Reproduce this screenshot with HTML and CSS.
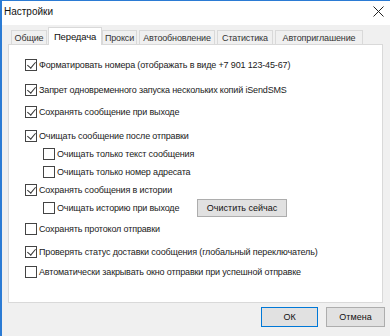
FILE: index.html
```html
<!DOCTYPE html>
<html lang="ru">
<head>
<meta charset="utf-8">
<link rel="stylesheet" href="styles.css">
</head>
<body>
<div class="window">
  <div class="titlebar">
    <span class="title">Настройки</span>
    <svg class="close" width="11" height="11" viewBox="0 0 11 11"><path d="M0.5 0.5L10.5 10.5M10.5 0.5L0.5 10.5" stroke="#222" stroke-width="1" fill="none"/></svg>
  </div>
  <div class="body">
    <div class="tabs">
      <div class="tab t1">Общие</div>
      <div class="tab t2 active">Передача</div>
      <div class="tab t3">Прокси</div>
      <div class="tab t4">Автообновление</div>
      <div class="tab t5">Статистика</div>
      <div class="tab t6">Автоприглашение</div>
    </div>
    <div class="panel">
      <div class="row r1"><span class="cb on"></span><span>Форматировать номера (отображать в виде +7 901 123-45-67)</span></div>
      <div class="row r2"><span class="cb on"></span><span>Запрет одновременного запуска нескольких копий iSendSMS</span></div>
      <div class="row r3"><span class="cb on"></span><span>Сохранять сообщение при выходе</span></div>
      <div class="row r4"><span class="cb on"></span><span>Очищать сообщение после отправки</span></div>
      <div class="row sub r5"><span class="cb"></span><span>Очищать только текст сообщения</span></div>
      <div class="row sub r6"><span class="cb"></span><span>Очищать только номер адресата</span></div>
      <div class="row r7"><span class="cb on"></span><span>Сохранять сообщения в истории</span></div>
      <div class="row sub r8"><span class="cb"></span><span class="fixed">Очищать историю при выходе</span><button class="btn clear">Очистить сейчас</button></div>
      <div class="row r9"><span class="cb"></span><span>Сохранять протокол отправки</span></div>
      <div class="row r10"><span class="cb on"></span><span>Проверять статус доставки сообщения (глобальный переключатель)</span></div>
      <div class="row r11"><span class="cb"></span><span>Автоматически закрывать окно отправки при успешной отправке</span></div>
    </div>
    <div class="footer">
      <button class="btn ok">ОК</button>
      <button class="btn cancel">Отмена</button>
    </div>
  </div>
</div>
</body>
</html>
```
FILE: styles.css
```css
* { box-sizing: border-box; }
html, body { margin: 0; padding: 0; }
body {
  font-family: "Liberation Sans", Arial, sans-serif;
  font-size: 9px;
  letter-spacing: -0.15px;
  color: #1a1a1a;
  background: #f0f0f0;
}
.window {
  width: 390px;
  height: 336px;
  border-left: 2px solid #2b7bd4;
  border-top: 1px solid #2b7bd4;
  background: #f0f0f0;
  overflow: hidden;
}
.titlebar {
  height: 24px;
  background: #fff;
  display: flex;
  align-items: center;
  justify-content: space-between;
  padding: 0 6px 3px 2px;
}
.title { font-size: 10px; color: #111; letter-spacing: 0; }
.body { padding: 0 7px 0 6px; }
.tabs {
  display: flex;
  align-items: flex-end;
  height: 19px;
  padding-left: 3px;
}
.tab {
  height: 14px;
  border: 1px solid #d9d9d9;
  border-bottom: none;
  background: #f0f0f0;
  display: flex;
  align-items: center;
  justify-content: center;
  font-size: 9px;
  color: #333;
  margin-right: 2px;
  white-space: nowrap;
  overflow: hidden;
}
.tab.active {
  height: 18px;
  background: #fff;
  color: #111;
  font-size: 9.5px;
  margin-left: -1px;
  margin-right: 0;
  position: relative;
  top: 1px;
}
.t1 { width: 36px; }
.t2 { width: 54px; }
.t3 { width: 35px; }
.t4 { width: 76px; }
.t5 { width: 56px; }
.t6 { width: 88px; }
.panel {
  height: 259px;
  background: #fff;
  border: 1px solid #d9d9d9;
  padding: 11px 0 0 16px;
}
.row {
  display: flex;
  align-items: center;
  height: 18px;
  white-space: nowrap;
}
.row.sub { padding-left: 18px; }
.cb {
  width: 12px;
  height: 12px;
  border: 1px solid #444;
  background: #fff;
  margin-right: 2px;
  flex: none;
  position: relative;
}
.cb.on::after {
  content: "";
  position: absolute;
  left: 3px;
  top: 0px;
  width: 4px;
  height: 7px;
  border-right: 1.1px solid #333;
  border-bottom: 1.1px solid #333;
  transform: rotate(40deg);
}
.r2 { margin-top: 7px; }
.r3 { margin-top: 4px; }
.r4 { margin-top: 6px; }
.r9 { margin-top: 3px; }
.r10 { margin-top: 5px; }
.r11 { margin-top: 2px; }
.fixed { width: 140px; }
.btn {
  font-family: "Liberation Sans", Arial, sans-serif;
  font-size: 9px;
  color: #111;
  background: #e1e1e1;
  border: 1px solid #adadad;
  padding: 0;
  height: 18px;
  display: flex;
  align-items: center;
  justify-content: center;
}
.clear { width: 90px; }
.footer {
  display: flex;
  justify-content: flex-end;
  gap: 8px;
  padding-top: 4px;
  margin-right: -2px;
}
.ok { width: 57px; height: 20px; border-color: #0078d7; }
.cancel { width: 59px; height: 20px; }
```
